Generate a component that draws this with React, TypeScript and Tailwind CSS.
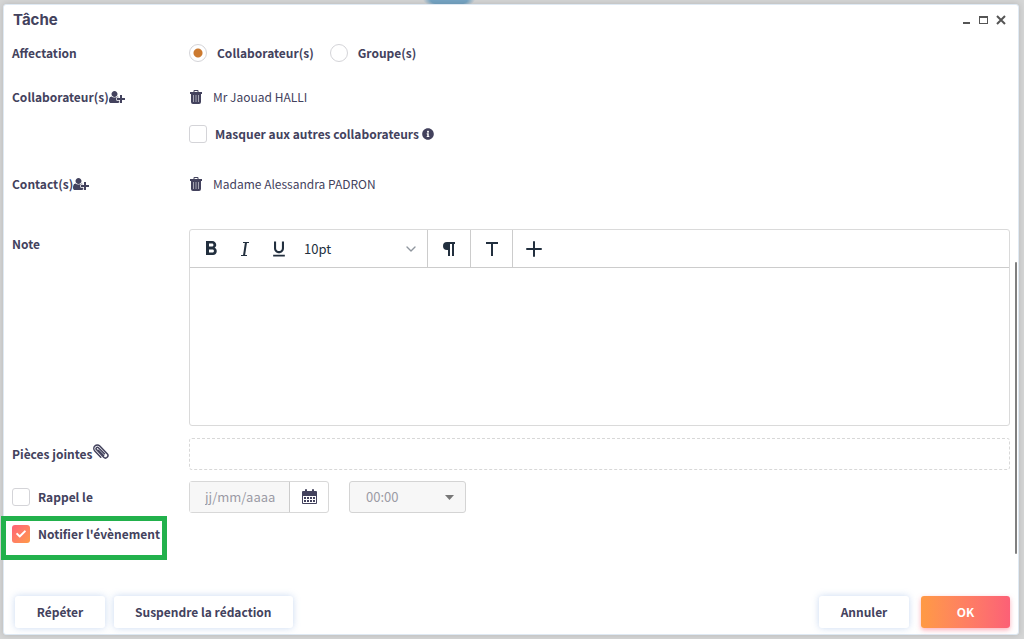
import { useState } from 'react'
import type { ReactNode } from 'react'
import { ChevronDown } from 'lucide-react'
import { FaCheck, FaInfoCircle } from 'react-icons/fa'
import { MdFormatBold, MdFormatUnderlined } from 'react-icons/md'

const UserPlusIcon = () => (
  <svg className="h-[14px] w-4" viewBox="0 0 2048 1792" fill="currentColor" aria-hidden="true">
    <path d="M704 896q-159 0-271.5-112.5t-112.5-271.5 112.5-271.5 271.5-112.5 271.5 112.5 112.5 271.5-112.5 271.5-271.5 112.5zM1664 1024h352q13 0 22.5 9.5t9.5 22.5v192q0 13-9.5 22.5t-22.5 9.5h-352v352q0 13-9.5 22.5t-22.5 9.5h-192q-13 0-22.5-9.5t-9.5-22.5v-352h-352q-13 0-22.5-9.5t-9.5-22.5v-192q0-13 9.5-22.5t22.5-9.5h352v-352q0-13 9.5-22.5t22.5-9.5h192q13 0 22.5 9.5t9.5 22.5v352zM928 1248q0 52 38 90t90 38h256v238q-68 50-171 50h-874q-121 0-194-69t-73-190q0-53 3.5-103.5t14-109 26.5-108.5 43-97.5 62-81 85.5-53.5 111.5-20q19 0 39 17 79 61 154.5 91.5t164.5 30.5 164.5-30.5 154.5-91.5q20-17 39-17 132 0 217 96h-223q-52 0-90 38t-38 90v192z" />
  </svg>
)

const TrashIcon = () => (
  <svg className="size-[15px]" viewBox="0 0 15 15" aria-hidden="true">
    <path fill="currentColor" d="M4.500 2V1a1 1 0 0 1 1-1h3a1 1 0 0 1 1 1v1H13v2h-1v8a2 2 0 0 1-2 2H4a2 2 0 0 1-2-2V4H1V2zM5.500 1v1h3V1z" fillRule="evenodd" />
    <path stroke="#a5a5b2" d="M4.500 5v7M7 5v7M9.500 5v7" />
  </svg>
)

const PaperclipIcon = () => (
  <svg className="size-4" viewBox="0 0 16 16" fill="none" stroke="currentColor" strokeWidth="1.5" strokeLinecap="round" aria-hidden="true">
    <path d="M11.5 9.8 5.4 3.7a1.3 1.3 0 0 0-1.9 1.9l7.2 7.6a2.4 2.4 0 0 0 3.5-3.4L6.8 2.1a3.5 3.5 0 0 0-5 4.9l6 6.2" />
    <path d="m5.6 6.4 5 5.2" />
  </svg>
)

const CalendarIcon = () => (
  <svg className="h-4 w-[15px]" viewBox="0 0 15 16" fill="currentColor" aria-hidden="true">
    <path fillRule="evenodd" d="M3 2V1a1 1 0 0 1 2 0v1h5V1a1 1 0 0 1 2 0v1h2a1 1 0 0 1 1 1v11a1 1 0 0 1-1 1H1a1 1 0 0 1-1-1V3a1 1 0 0 1 1-1zM1 7v7h13V7z" />
    <path d="M2 8h2v2H2zM5 8h2v2H5zM8 8h2v2H8zM11 8h2v2h-2zM2 11h2v2H2zM5 11h2v2H5zM8 11h2v2H8zM11 11h2v2h-2z" />
  </svg>
)

interface CheckProps {
  label: string
  checked: boolean
  onChange: (checked: boolean) => void
}

function Check({ label, checked, onChange }: CheckProps) {
  return (
    <label className="flex items-center gap-2 font-bold whitespace-nowrap">
      <span className="grid size-[18px] shrink-0">
        <input
          type="checkbox"
          checked={checked}
          onChange={e => onChange(e.target.checked)}
          className="peer col-start-1 row-start-1 size-[18px] appearance-none rounded-[3px] border border-[#d4d4d8] bg-white checked:border-0 checked:bg-linear-to-br checked:from-[#ff5f78] checked:to-[#ff9a44]"
        />
        <FaCheck className="pointer-events-none invisible col-start-1 row-start-1 size-[10px] place-self-center text-white peer-checked:visible" />
      </span>
      {label}
    </label>
  )
}

interface RadioProps {
  label: string
  value: string
  current: string
  onSelect: (value: string) => void
}

function Radio({ label, value, current, onSelect }: RadioProps) {
  return (
    <label className="flex items-center gap-[10px] font-bold">
      <input
        type="radio"
        name="affectation"
        value={value}
        checked={current === value}
        onChange={() => onSelect(value)}
        className="size-[18px] appearance-none rounded-full border border-[#d4d4d8] bg-white checked:bg-[radial-gradient(circle,#cc7a30_4px,#ffffff_5px)]"
      />
      {label}
    </label>
  )
}

function Person({ name }: { name: string }) {
  return (
    <div className="flex h-9 items-center gap-[9px]">
      <button type="button" aria-label={`Retirer ${name}`}>
        <TrashIcon />
      </button>
      <span>{name}</span>
    </div>
  )
}

function AddLabel({ text }: { text: string }) {
  return (
    <div className="flex h-9 items-center font-bold">
      {text}
      <button type="button" aria-label={`Ajouter ${text}`}>
        <UserPlusIcon />
      </button>
    </div>
  )
}

function Tool({ label, children }: { label: string; children: ReactNode }) {
  return (
    <button type="button" aria-label={label} className="flex w-[34px] items-center justify-center">
      {children}
    </button>
  )
}

const secondaryButton =
  'h-8 min-w-[90px] rounded-[3px] bg-white px-[21px] font-bold shadow-[0_0_7px_rgba(120,160,220,0.4)]'

function App() {
  const [target, setTarget] = useState('collaborateur')
  const [hidden, setHidden] = useState(false)
  const [reminder, setReminder] = useState(false)
  const [notify, setNotify] = useState(true)
  const [note, setNote] = useState('')

  return (
    <div className="flex min-h-screen flex-col bg-[#d5d6d6] bg-[radial-gradient(ellipse_26px_8px_at_449px_0,#76a5c4_70%,transparent)] pt-1 pr-[5px] pb-1 pl-[3px] font-['Noto_Sans_CJK_SC',sans-serif] text-xs leading-5 text-[#43425d]">
      <div
        role="dialog"
        aria-labelledby="dialog-title"
        className="flex flex-1 flex-col rounded-[3px] border border-[#dfe9f3] bg-white shadow-[0_0_6px_rgba(0,0,0,0.15)]"
      >
        <header className="flex h-[30px] items-center justify-between pr-3 pb-px pl-[9px]">
          <h1 id="dialog-title" className="font-['Inter',sans-serif] text-[15px] font-bold">Tâche</h1>
          <div className="flex items-center gap-2 text-[#555555]">
            <button type="button" aria-label="Réduire">
              <svg className="h-[10px] w-2" viewBox="0 0 8 10" fill="currentColor"><path d="M1 7h7v2H1z" /></svg>
            </button>
            <button type="button" aria-label="Agrandir">
              <svg className="size-[10px]" viewBox="0 0 10 10" fill="currentColor"><path fillRule="evenodd" d="M1 1h9v8H1zM2 3v5h7V3z" /></svg>
            </button>
            <button type="button" aria-label="Fermer">
              <svg className="size-[10px]" viewBox="0 0 10 10" stroke="currentColor" strokeWidth="2"><path d="m1 1 8 8M9 1 1 9" /></svg>
            </button>
          </div>
        </header>

        <div className="flex flex-1 justify-between">
          <main className="flex-1 pr-[5px] pl-2">
            <div className="grid grid-cols-[177px_1fr]">
              <div className="flex h-9 items-center font-bold">Affectation</div>
              <div role="radiogroup" aria-label="Affectation" className="flex h-9 items-center gap-4">
                <Radio label="Collaborateur(s)" value="collaborateur" current={target} onSelect={setTarget} />
                <Radio label="Groupe(s)" value="groupe" current={target} onSelect={setTarget} />
              </div>
            </div>

            <div className="mt-2 grid grid-cols-[177px_1fr]">
              <AddLabel text="Collaborateur(s)" />
              <div>
                <Person name="Mr Jaouad HALLI" />
                <div className="flex h-[38px] items-center gap-[3px]">
                  <Check label="Masquer aux autres collaborateurs" checked={hidden} onChange={setHidden} />
                  <FaInfoCircle className="size-3" />
                </div>
              </div>
            </div>

            <div className="mt-[13px] grid grid-cols-[177px_1fr]">
              <AddLabel text="Contact(s)" />
              <Person name="Madame Alessandra PADRON" />
            </div>

            <div className="mt-[27px] grid grid-cols-[177px_1fr]">
              <label htmlFor="note" className="pt-[5px] font-bold">Note</label>
              <div className="rounded-[3px] border border-[#dadada]">
                <div className="flex h-[38px] border-b border-[#cccccc] text-[#222f3e]">
                  <div className="flex border-r border-[#cccccc] pl-1">
                    <Tool label="Gras"><MdFormatBold className="size-6" /></Tool>
                    <Tool label="Italique">
                      <svg className="size-4" viewBox="0 0 16 16" fill="none" stroke="currentColor">
                        <path strokeWidth="2" d="M9 1.500 7 14.500" />
                        <path d="M6 1.500h6M4 14.500h6" />
                      </svg>
                    </Tool>
                    <Tool label="Souligné"><MdFormatUnderlined className="size-5" /></Tool>
                    <button type="button" className="flex w-[131px] items-center justify-between pr-2 pl-2 text-[13px]">
                      10pt
                      <ChevronDown className="size-4 text-[#8f969e]" />
                    </button>
                  </div>
                  <button type="button" aria-label="Paragraphe" className="flex w-[43px] items-center justify-center border-r border-[#cccccc]">
                    <svg className="h-[14px] w-3" viewBox="0 0 12 14" fill="currentColor">
                      <path d="M4 0h8v2h-1v12H9V2H7v12H5V8H4a4 4 0 0 1 0-8z" />
                    </svg>
                  </button>
                  <button type="button" aria-label="Texte" className="flex w-[42px] items-center justify-center border-r border-[#cccccc]">
                    <svg className="size-[14px]" viewBox="0 0 14 14" fill="none" stroke="currentColor" strokeWidth="2">
                      <path d="M1 1h12M7 1v13" />
                    </svg>
                  </button>
                  <button type="button" aria-label="Insérer" className="flex w-[42px] items-center justify-center">
                    <svg className="size-4" viewBox="0 0 16 16" fill="none" stroke="currentColor" strokeWidth="2" strokeLinecap="round">
                      <path d="M8 1v14M1 8h14" />
                    </svg>
                  </button>
                </div>
                <textarea
                  id="note"
                  value={note}
                  onChange={e => setNote(e.target.value)}
                  className="block h-[157px] w-full resize-none p-2 outline-none"
                />
              </div>
            </div>

            <div className="mt-3 grid grid-cols-[177px_1fr]">
              <div className="flex h-8 items-center font-bold">
                Pièces jointes
                <button type="button" aria-label="Joindre un fichier" className="pb-1">
                  <PaperclipIcon />
                </button>
              </div>
              <div className="rounded-[3px] border border-dashed border-[#d8d8d8]" />
            </div>

            <div className="mt-[11px] grid grid-cols-[177px_1fr]">
              <Check label="Rappel le" checked={reminder} onChange={setReminder} />
              <div className="flex h-8 gap-5 text-[13px]">
                <div className="flex w-[140px] rounded-[3px] border border-[#d8d8d8]">
                  <input
                    type="text"
                    aria-label="Date de rappel"
                    placeholder="jj/mm/aaaa"
                    disabled={!reminder}
                    className="w-[100px] border-r border-[#cccccc] bg-[#f7f7f7] pl-[15px] placeholder:text-[#9b9ba5]"
                  />
                  <button type="button" aria-label="Choisir une date" className="flex flex-1 items-center justify-center">
                    <CalendarIcon />
                  </button>
                </div>
                <div className="grid w-[117px] items-center">
                  <select
                    aria-label="Heure de rappel"
                    disabled={!reminder}
                    className="col-start-1 row-start-1 h-8 appearance-none rounded-[3px] border border-[#d4d4d4] bg-[#f7f7f7] pl-4 text-[#9b9ba5] opacity-100"
                  >
                    <option>00:00</option>
                  </select>
                  <svg className="pointer-events-none col-start-1 row-start-1 mr-3 h-[5px] w-[9px] justify-self-end text-[#777777]" viewBox="0 0 9 5" fill="currentColor">
                    <path d="M0 0h9L4.500 5z" />
                  </svg>
                </div>
              </div>
            </div>

            <div className="mt-[3px] -ml-[11px] flex h-11 w-[166px] items-start border-[5px] border-[#22b14c] pt-[3px] pl-[6px]">
              <Check label="Notifier l'évènement" checked={notify} onChange={setNotify} />
            </div>
          </main>
          <div className="mr-px flex w-[2px] flex-col justify-end pb-[6px]">
            <div className="h-[292px] rounded-full bg-[#808080]" />
          </div>
        </div>

        <footer className="flex items-center justify-between pt-9 pr-2 pb-[6px] pl-[11px]">
          <div className="flex gap-[9px]">
            <button type="button" className={secondaryButton}>Répéter</button>
            <button type="button" className={secondaryButton}>Suspendre la rédaction</button>
          </div>
          <div className="flex gap-3">
            <button type="button" className={secondaryButton}>Annuler</button>
            <button type="button" className="h-8 w-[89px] rounded-[3px] bg-linear-to-r from-[#ff9a44] to-[#fc6076] font-bold text-white shadow-[0_2px_5px_rgba(252,96,118,0.5)]">
              OK
            </button>
          </div>
        </footer>
      </div>
    </div>
  )
}

export default App
